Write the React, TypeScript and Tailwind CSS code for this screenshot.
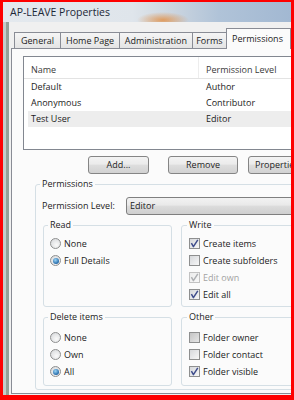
import React from "react";

function Check({ checked = false, disabled = false, dim = false }: { checked?: boolean; disabled?: boolean; dim?: boolean }) {
  const border = disabled ? "border-[#c2c2c2]" : "border-[#8e8f8f]";
  const fill = dim
    ? "bg-[linear-gradient(135deg,#c4c4c4,#e6e6e6)]"
    : disabled
    ? "bg-[linear-gradient(135deg,#ececec,#f8f8f8)]"
    : "bg-[linear-gradient(135deg,#d6d8db,#f7f7f7)]";
  return (
    <span className={`w-[11px] h-[11px] shrink-0 border ${border} ${fill} flex items-center justify-center`}>
      {checked && (
        <svg width="9" height="9" viewBox="0 0 9 9">
          <path
            d="M1.4 4.2 L3.4 7.6 L7.8 0.9"
            stroke={disabled ? "#aeb0b3" : "#3f4d8c"}
            strokeWidth="1.5"
            fill="none"
            strokeLinejoin="round"
          />
        </svg>
      )}
    </span>
  );
}

function Radio({ checked = false }: { checked?: boolean }) {
  return (
    <span className="w-[11px] h-[11px] shrink-0 rounded-full border border-[#8e8f8f] bg-[radial-gradient(circle_at_60%_65%,#fafafa,#d3d5d8)] flex items-center justify-center">
      {checked && (
        <span className="w-[6px] h-[6px] rounded-full bg-[radial-gradient(circle_at_40%_35%,#9bd6f7,#1d62a3_75%)]" />
      )}
    </span>
  );
}

function Row({ children }: { children: React.ReactNode }) {
  return <div className="h-[17px] flex items-center gap-[3px]">{children}</div>;
}

export default function App() {
  const btn =
    "shrink-0 h-[18px] rounded-[3px] border border-[#858585] bg-[linear-gradient(#f3f3f3_0%,#ebebeb_45%,#dedede_50%,#d2d2d2_100%)] flex items-center text-[#1e1e1e]";
  return (
    <div className="w-[294px] h-[400px] bg-[#fe0000] pt-[2px] pl-[3px] pr-[3px] pb-[5px] font-['Open_Sans',sans-serif] text-[9px] leading-[12px] text-[#1b1b1b]">
      <div className="w-[288px] h-[393px] overflow-hidden flex flex-col bg-[#f0f0f0]">
        {/* Title bar */}
        <div className="h-[20px] shrink-0 flex items-center pl-[7px] text-[10.5px] text-[#1c2838] bg-[image:radial-gradient(ellipse_26px_8px_at_160px_18px,rgba(226,146,74,0.85),rgba(226,146,74,0)),linear-gradient(90deg,#e4e9ee_0%,#dfe5eb_45%,#cdd6e0_58%,#b0c3d8_75%,#a2b8d2_100%)]">
          AP-LEAVE Properties
        </div>

        <div className="flex-1 flex min-h-0">
          <div className="w-[3px] shrink-0 bg-[#c3ccc8]" />
          <div className="w-[3px] shrink-0 bg-[#93a096]" />

          <div className="flex-1 min-w-0 flex flex-col pl-[2px] pt-[6px] pb-[1px]">
            {/* Tabs */}
            <div className="flex items-end pl-[3px] h-[20px] shrink-0">
              <div className="w-[47px] h-[16px] border-t border-l border-[#898c95] bg-[linear-gradient(#f5f5f5,#e4e4e4)] flex items-center justify-center">
                General
              </div>
              <div className="w-[60px] h-[16px] border-t border-l border-[#898c95] bg-[linear-gradient(#f5f5f5,#e4e4e4)] flex items-center justify-center">
                Home Page
              </div>
              <div className="w-[74px] h-[16px] border-t border-l border-[#898c95] bg-[linear-gradient(#f5f5f5,#e4e4e4)] flex items-center justify-center">
                Administration
              </div>
              <div className="w-[35px] h-[16px] border-t border-l border-[#898c95] bg-[linear-gradient(#f5f5f5,#e4e4e4)] flex items-center justify-center">
                Forms
              </div>
              <div className="w-[66px] h-[21px] -mb-px relative z-10 border-t border-l border-r border-[#898c95] bg-[#fbfbfb] pl-[5px] flex items-center">
                Permissions
              </div>
            </div>

            {/* Panel */}
            <div className="w-[300px] flex-1 border border-[#898c95] bg-[#fbfbfb] pt-[7px] pl-[11px]">
              {/* List */}
              <div className="w-[285px] h-[94px] border border-[#828790] bg-white">
                <div className="h-[22px] flex border-b border-[#e3e3e3] text-[#3a3a3a]">
                  <div className="w-[175px] pl-[7px] pt-[7px] border-r border-[#ededed]">Name</div>
                  <div className="pl-[7px] pt-[7px]">Permission Level</div>
                </div>
                <div className="h-[16px] ml-[4px] pl-[3px] flex items-center">
                  <span className="w-[175px]">Default</span>
                  <span>Author</span>
                </div>
                <div className="h-[16px] ml-[4px] pl-[3px] flex items-center">
                  <span className="w-[175px]">Anonymous</span>
                  <span>Contributor</span>
                </div>
                <div className="h-[16px] ml-[4px] pl-[3px] flex items-center bg-[#ededed]">
                  <span className="w-[175px]">Test User</span>
                  <span>Editor</span>
                </div>
              </div>

              {/* Buttons */}
              <div className="flex mt-[6px]">
                <div className={`${btn} w-[61px] ml-[65px] justify-center`}>Add...</div>
                <div className={`${btn} w-[70px] ml-[19px] justify-center`}>Remove</div>
                <div className={`${btn} w-[75px] ml-[10px] pl-[6px]`}>Properties...</div>
              </div>

              {/* Permissions group */}
              <fieldset className="mt-[4px] ml-[12px] w-[290px] border border-[#d5dfe5] rounded-[3px] pb-[3px]">
                <legend className="ml-[4px] px-[2px]">Permissions</legend>

                <div className="pl-[6px] mt-[7px] flex items-center h-[18px]">
                  <span className="w-[84px] shrink-0">Permission Level:</span>
                  <div className="w-[186px] h-[18px] shrink-0 rounded-[3px] border border-[#7f7f7f] bg-[linear-gradient(#f2f2f2_0%,#e9e9e9_45%,#dcdcdc_50%,#cfcfcf_100%)] flex items-center pl-[3px]">
                    <span>Editor</span>
                    <svg className="ml-auto mr-[7px]" width="7" height="4" viewBox="0 0 7 4">
                      <path d="M0 0 L7 0 L3.5 4 Z" fill="#1a1a1a" />
                    </svg>
                  </div>
                </div>

                <div className="flex gap-[9px] mt-[4px] pl-[7px]">
                  <fieldset className="w-[129px] shrink-0 border border-[#d5dfe5] rounded-[3px]">
                    <legend className="ml-[4px] px-[2px]">Read</legend>
                    <div className="pl-[6px] pt-[4px]">
                      <Row>
                        <Radio />
                        <span>None</span>
                      </Row>
                      <Row>
                        <Radio checked />
                        <span>Full Details</span>
                      </Row>
                    </div>
                  </fieldset>
                  <fieldset className="w-[140px] shrink-0 border border-[#d5dfe5] rounded-[3px] pb-[3px]">
                    <legend className="ml-[5px] px-[2px]">Write</legend>
                    <div className="pl-[7px] pt-[4px]">
                      <Row>
                        <Check checked />
                        <span>Create items</span>
                      </Row>
                      <Row>
                        <Check />
                        <span>Create subfolders</span>
                      </Row>
                      <Row>
                        <Check checked disabled />
                        <span className="text-[#a3a3a3]">Edit own</span>
                      </Row>
                      <Row>
                        <Check checked />
                        <span>Edit all</span>
                      </Row>
                    </div>
                  </fieldset>
                </div>

                <div className="flex gap-[9px] mt-[4px] pl-[7px]">
                  <fieldset className="w-[129px] shrink-0 border border-[#d5dfe5] rounded-[3px] pb-[5px]">
                    <legend className="ml-[4px] px-[2px]">Delete items</legend>
                    <div className="pl-[6px] pt-[6px]">
                      <Row>
                        <Radio />
                        <span>None</span>
                      </Row>
                      <Row>
                        <Radio />
                        <span>Own</span>
                      </Row>
                      <Row>
                        <Radio checked />
                        <span>All</span>
                      </Row>
                    </div>
                  </fieldset>
                  <fieldset className="w-[140px] shrink-0 border border-[#d5dfe5] rounded-[3px] pb-[5px]">
                    <legend className="ml-[5px] px-[2px]">Other</legend>
                    <div className="pl-[7px] pt-[6px]">
                      <Row>
                        <Check dim />
                        <span>Folder owner</span>
                      </Row>
                      <Row>
                        <Check />
                        <span>Folder contact</span>
                      </Row>
                      <Row>
                        <Check checked />
                        <span>Folder visible</span>
                      </Row>
                    </div>
                  </fieldset>
                </div>
              </fieldset>
            </div>
          </div>
        </div>
      </div>
    </div>
  );
}
